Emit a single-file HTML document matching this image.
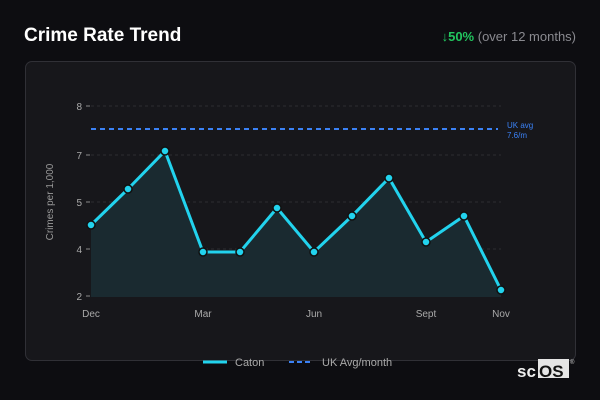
<!DOCTYPE html><html><head><style>
body{margin:0;width:600px;height:400px;background:#0d0d11;font-family:"Liberation Sans",sans-serif;position:relative;overflow:hidden}
.t{position:absolute;left:24px;top:25px;color:#fff;font-weight:bold;font-size:19px}
.r{position:absolute;right:24px;top:29px;font-size:13px;color:#8a8a90}
.r b{color:#22c55e}
.p{position:absolute;left:25px;top:61px;width:549px;height:298px;background:#17171b;border:1px solid #303036;border-radius:7px}
</style></head><body>
<div class="t">Crime Rate Trend</div>
<div class="r"><b>↓50%</b> (over 12 months)</div>
<div class="p"></div>
<svg width="600" height="400" style="position:absolute;left:0;top:0" font-family="Liberation Sans,sans-serif">
<g stroke="#2c2c32" stroke-dasharray="3,3"><line x1="91" x2="501" y1="106" y2="106"/><line x1="91" x2="501" y1="155" y2="155"/><line x1="91" x2="501" y1="202" y2="202"/><line x1="91" x2="501" y1="249" y2="249"/></g>
<g stroke="#888" ><line x1="86" x2="90" y1="106" y2="106"/><line x1="86" x2="90" y1="155" y2="155"/><line x1="86" x2="90" y1="202" y2="202"/><line x1="86" x2="90" y1="249" y2="249"/><line x1="86" x2="90" y1="296" y2="296"/></g>
<g fill="#aaa" font-size="10" text-anchor="end"><text x="82" y="110">8</text><text x="82" y="159">7</text><text x="82" y="206">5</text><text x="82" y="253">4</text><text x="82" y="300">2</text></g>
<text transform="translate(53,202) rotate(-90)" fill="#999" font-size="10" text-anchor="middle">Crimes per 1,000</text>
<line x1="91" x2="498" y1="129" y2="129" stroke="#3b82f6" stroke-width="2" stroke-dasharray="5,4"/>
<text x="507" y="128" fill="#3b82f6" font-size="8">UK avg</text><text x="507" y="138" fill="#3b82f6" font-size="8">7.6/m</text>
<path d="M91,225 L128,189 L165,151 L203,252 L240,252 L277,208 L314,252 L352,216 L389,178 L426,242 L464,216 L501,290 L501,297 L91,297Z" fill="#1a2a30"/>
<path d="M91,225 L128,189 L165,151 L203,252 L240,252 L277,208 L314,252 L352,216 L389,178 L426,242 L464,216 L501,290" fill="none" stroke="#22d3ee" stroke-width="3"/>
<g fill="#22d3ee" stroke="#111" stroke-width="1.5"><circle cx="91" cy="225" r="4"/><circle cx="128" cy="189" r="4"/><circle cx="165" cy="151" r="4"/><circle cx="203" cy="252" r="4"/><circle cx="240" cy="252" r="4"/><circle cx="277" cy="208" r="4"/><circle cx="314" cy="252" r="4"/><circle cx="352" cy="216" r="4"/><circle cx="389" cy="178" r="4"/><circle cx="426" cy="242" r="4"/><circle cx="464" cy="216" r="4"/><circle cx="501" cy="290" r="4"/></g>
<g fill="#aaa" font-size="10" text-anchor="middle"><text x="91" y="317">Dec</text><text x="203" y="317">Mar</text><text x="314" y="317">Jun</text><text x="426" y="317">Sept</text><text x="501" y="317">Nov</text></g>
<line x1="203" x2="227" y1="362" y2="362" stroke="#22d3ee" stroke-width="3"/>
<text x="235" y="366" fill="#aaa" font-size="11">Caton</text>
<line x1="289" x2="313" y1="362" y2="362" stroke="#3b82f6" stroke-width="2" stroke-dasharray="5,3"/>
<text x="322" y="366" fill="#aaa" font-size="11">UK Avg/month</text>
<rect x="538" y="359" width="31" height="19" fill="#e5e5e5"/>
<text x="517" y="377" fill="#eee" font-size="17" font-weight="bold">sc</text>
<text x="539" y="377" fill="#111" font-size="17" font-weight="bold">OS</text>
<text x="570" y="364" fill="#ccc" font-size="6">®</text>
</svg>
</body></html>
